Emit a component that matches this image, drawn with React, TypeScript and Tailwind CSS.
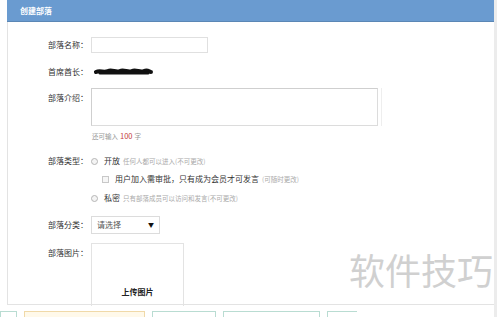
const Radio = () => (
  <span className="inline-block w-[7px] h-[7px] rounded-full border border-[#b5b5b5] bg-[#f4f4f4] shrink-0" />
);

const Scribble = () => (
  <svg width="60" height="10" viewBox="0 0 60 10" className="ml-[3px]">
    <path
      d="M2 5 C6 3 10 6 14 4 S22 6 26 4 S34 6 38 4 S46 6 50 4 S55 5 57 5"
      stroke="#111"
      strokeWidth="4"
      fill="none"
      strokeLinecap="round"
    />
    <path d="M6 6 L54 6" stroke="#111" strokeWidth="3" strokeLinecap="round" />
  </svg>
);

export default function App() {
  return (
    <div
      className="relative w-[500px] h-[317px] overflow-hidden bg-white text-[#333]"
      style={{ fontFamily: '"Noto Sans CJK SC", "Noto Sans", sans-serif' }}
    >
      <div className="flex">
        <div className="w-[494px]">
          <div className="ml-[7px] w-[487px]">
            <div className="h-[22px] bg-[#6a9bd0] border-b border-[#5b87b5] flex items-center pl-[13px]">
              <span className="text-[8px] font-bold text-white leading-none">创建部落</span>
            </div>
            <div className="h-[283px] border-l border-b border-[#e3e3e3] pt-[15px] text-[8px]">
              <div className="flex items-center h-[16px]">
                <div className="w-[83px] text-right pr-[3px] leading-none">部落名称：</div>
                <div className="w-[117px] h-[16px] border border-[#e0e0e0]" />
              </div>
              <div className="flex items-center h-[16px] mt-[11px]">
                <div className="w-[83px] text-right pr-[3px] leading-none">首席酋长：</div>
                <Scribble />
              </div>
              <div className="flex mt-[8px]">
                <div className="w-[83px] text-right pr-[3px] leading-none pt-[6px]">部落介绍：</div>
                <div className="w-[287px] h-[38px] border border-[#dcdcdc] border-t-[#cfcfcf] border-l-[#cfcfcf]" />
                <div className="ml-[3px] w-px h-[38px] bg-[#eeeeee]" />
              </div>
              <div className="flex items-center h-[10px] mt-[5px] pl-[84px] text-[6.5px] text-[#999] leading-none">
                还可输入 <span className="text-[#c23b3b] text-[7.5px] mx-[2px]">100</span> 字
              </div>
              <div className="flex items-center h-[12px] mt-[14px]">
                <div className="w-[83px] text-right pr-[3px] leading-none">部落类型：</div>
                <Radio />
                <span className="ml-[6px] leading-none">开放</span>
                <span className="ml-[3px] text-[6.5px] text-[#aaa] leading-none">任何人都可以进入(不可更改)</span>
              </div>
              <div className="flex items-center h-[12px] mt-[6px] pl-[94px]">
                <span className="inline-block w-[7px] h-[7px] border border-[#c8c8c8] bg-[#f6f6f6] shrink-0" />
                <span className="ml-[6px] leading-none">用户加入需审批，只有成为会员才可发言</span>
                <span className="ml-[3px] text-[6.5px] text-[#aaa] leading-none">(可随时更改)</span>
              </div>
              <div className="flex items-center h-[12px] mt-[7px] pl-[83px]">
                <Radio />
                <span className="ml-[6px] leading-none">私密</span>
                <span className="ml-[3px] text-[6.5px] text-[#aaa] leading-none">只有部落成员可以访问和发言(不可更改)</span>
              </div>
              <div className="flex items-center h-[18px] mt-[12px]">
                <div className="w-[83px] text-right pr-[3px] leading-none">部落分类：</div>
                <div className="w-[69px] h-[18px] border border-[#dcdcdc] flex items-center justify-between px-[5px]">
                  <span className="leading-none text-[#555]">请选择</span>
                  <span className="text-[6px] leading-none text-[#111]">▼</span>
                </div>
              </div>
              <div className="flex mt-[9px]">
                <div className="w-[83px] text-right pr-[3px] leading-none pt-[6px]">部落图片：</div>
                <div className="w-[93px] h-[63px] border-l border-r border-t border-[#e3e3e3] flex items-end justify-center pb-[10px]">
                  <span className="font-bold leading-none text-[#222]">上传图片</span>
                </div>
              </div>
            </div>
          </div>
          <div className="flex mt-[6px] h-[20px]">
            <div className="w-[17px] border border-[#b9dcd2]" />
            <div className="ml-[7px] w-[121px] border border-[#f0d9a8] bg-[#fff9ea]" />
            <div className="ml-[7px] w-[64px] border border-[#b9dcd2]" />
            <div className="ml-[7px] w-[97px] border border-[#b9dcd2]" />
            <div className="ml-[7px] w-[30px] border-l border-t border-[#b9dcd2]" />
          </div>
        </div>
        <div className="w-[3px] h-[317px] bg-[#ececec]" />
      </div>
      <div className="absolute left-[349px] top-[251px] text-[36px] leading-none text-[#d0d0d0]">
        软件技巧
      </div>
    </div>
  );
}
